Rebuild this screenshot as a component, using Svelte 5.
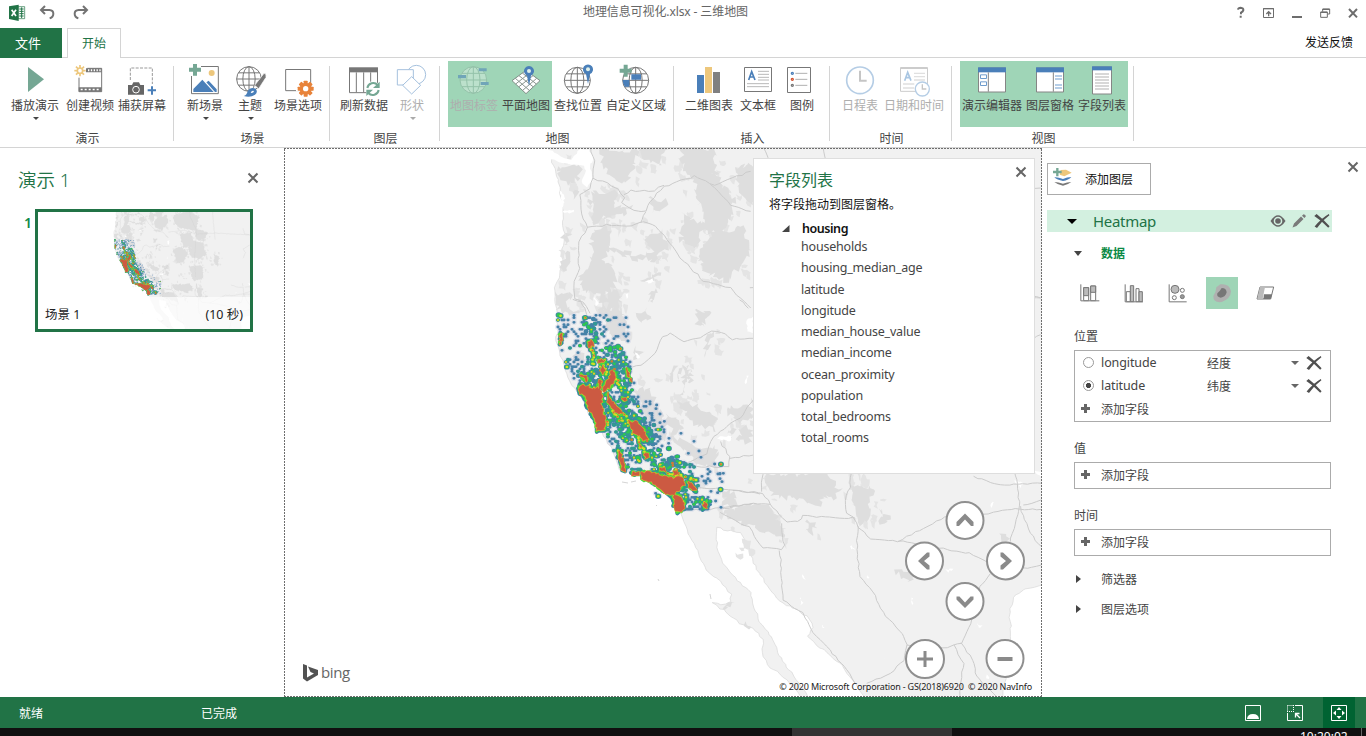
<script>
  // Ribbon glyphs are drawn on a 3x grid; ox/oy give the origin of that grid.
  const globe = (cx, cy, r, c) => `<g fill="none" stroke="${c}" stroke-width="3"><circle cx="${cx}" cy="${cy}" r="${r}" fill="#fff" fill-opacity=".55"/><ellipse cx="${cx}" cy="${cy}" rx="${r * 0.5}" ry="${r}"/><path d="M${cx} ${cy - r}V${cy + r}M${cx - r} ${cy}H${cx + r}M${cx - r * 0.85} ${cy - r * 0.5}H${cx + r * 0.85}M${cx - r * 0.85} ${cy + r * 0.5}H${cx + r * 0.85}"/></g>`;
  const pin = (x, y) => `<path d="M${x} ${y + 44}L${x - 6} ${y + 14}A15 15 0 1 1 ${x + 6} ${y + 14}Z" fill="#4a7fb9"/><circle cx="${x}" cy="${y}" r="6" fill="#dff0ea"/>`;
  const plus = (x, y, c = '#75a794') => `<path d="M${x - 6} ${y - 18}h12v12h12v12h-12v12h-12v-12h-12v-12h12z" fill="${c}"/>`;
  const gear = () => {
    let d = '';
    for (let i = 0; i < 4; i++) d += `<rect x="911" y="242" width="12" height="48" rx="2" transform="rotate(${i * 45} 917 266)" fill="#e8833a"/>`;
    return d + '<circle cx="917" cy="266" r="18" fill="#e8833a"/><circle cx="917" cy="266" r="8" fill="#fff"/>';
  };
  const sun = () => {
    let d = '';
    for (let i = 0; i < 8; i++) d += `<path d="M240 195v9" transform="rotate(${i * 45} 240 212)" stroke="#edc77c" stroke-width="5"/>`;
    return d + '<circle cx="240" cy="212" r="8" fill="none" stroke="#edc77c" stroke-width="5"/>';
  };
  const film = () => {
    let d = '<path d="M237 233V275H305V205H262" fill="none" stroke="#777" stroke-width="3"/><path d="M258 205h47v12h-47zM236 262h69v13h-69z" fill="#777"/><path d="M245 219h50v42h-50z" fill="#fff"/>';
    for (let i = 0; i < 5; i++) d += `<path d="M${264 + i * 8.5} 208h4v6h-4zM${242 + i * 12} 266h6v5h-6z" fill="#fff"/>`;
    return d;
  };
  const windowIcon = (x, w) => `<path d="M${x + 1.5} 204h${w - 3}v72h-${w - 3}z" fill="#fff" stroke="#858585" stroke-width="3"/><path d="M${x} 202h${w}v15h-${w}z" fill="#4a7fb9"/>`;
  const clock = (x, y, r, w) => `<circle cx="${x}" cy="${y}" r="${r}" fill="#fff" stroke="#b5cde5" stroke-width="${w}"/>`;

  const I = {
    play: '<path d="M84 201L132 238L84 276Z" fill="#75a794"/>',
    video: film() + sun(),
    capture: '<path d="M391 240V204H457V252" fill="none" stroke="#999" stroke-width="3" stroke-dasharray="9 4"/><path d="M384 255h12l4-8h17l4 8h11v29h-48z" fill="#666"/><circle cx="408" cy="269" r="10" fill="#666" stroke="#fff" stroke-width="3"/><path d="M443 271h25M456 259v25" stroke="#4a7fb9" stroke-width="6"/>',
    scene: '<path d="M603 199.5H655V281H574.500V228" fill="#fff" stroke="#777" stroke-width="3"/><circle cx="635" cy="219" r="9" fill="#edc77c"/><path d="M580 276v-9l27-28 34 37zM619 247l7-5 24 26v8h-5z" fill="#4a7fb9"/>' + plus(585, 209),
    theme: globe(747, 237, 37, '#777') + '<path d="M792 220q8 0 6 12l-22 34-12-10z" fill="#777" stroke="#fff" stroke-width="2"/><path d="M731 288q9-2 12-14 8-14 24-8 8 10-2 18-14 10-34 4z" fill="#4a7fb9"/><path d="M752 279q3-9 10-6-1 7-10 6z" fill="#fff"/>',
    options: '<path d="M857 208.500H932V272H857Z" fill="#fff" stroke="#777" stroke-width="3"/><path d="M888 272h50" stroke="#fff" stroke-width="5"/>' + gear(),
    refresh: '<path d="M58.500 55H142.500V128H58.500Z" fill="#fff" stroke="#777" stroke-width="3"/><path d="M57 52h87v15H57z" fill="#777"/><path d="M79 67v60M101 67v60M122 67v60" stroke="#777" stroke-width="3"/><circle cx="129" cy="117" r="23" fill="#fff"/><path d="M112 114a18 18 0 0 1 31-9M146 120a18 18 0 0 1-31 9" fill="none" stroke="#75a794" stroke-width="6"/><path d="M149 95v19h-20zM109 138v-19h20z" fill="#75a794"/>',
    shapes: '<g fill="#fff" stroke="#a5c1de" stroke-width="3"><circle cx="259" cy="74" r="28"/><path d="M202 59h48v46h-48z"/><path d="M245 80l27 26-27 26-27-26z"/></g>',
    tags: `<g opacity=".55">${globe(430, 90, 40, '#8bb39e')}<path d="M446 55h24v9h-24zM384 75h24v10h-24zM452 96h24v9h-24z" fill="#4a7fb9"/></g>`,
    flat: '<path d="M588 61L630 92L588 131L546 92Z" fill="#fff" stroke="#7f8f87" stroke-width="3"/><path d="M577 69l42 33M567 77l42 33M556 85l42 36M599 69l-42 33M609 77l-42 33M620 85l-42 36" stroke="#8a9690" stroke-width="3"/>' + pin(597, 63),
    find: globe(742, 91, 39, '#777') + pin(774, 58),
    custom: globe(917, 91, 39, '#777') + '<path d="M904 73h29v16h-29zM878 90h20v20h-14q-6-9-6-20z" fill="#4a7fb9"/>' + plus(887, 62),
    chart: '<path d="M81 75h21v54H81z" fill="#4a7fb9"/><path d="M105 51h21v78h-21z" fill="#edc77c"/><path d="M129 66h21v63h-21z" fill="#808080"/>',
    text: '<path d="M223.500 52.500h81v72h-81z" fill="#fff" stroke="#777" stroke-width="3"/><path d="M236 90l9-25 10 25M239 81h13" fill="none" stroke="#4a7fb9" stroke-width="5"/><path d="M264 64h33M264 73h33M264 82h33M264 90h33M231 101h66M231 110h66" stroke="#b8b8b8" stroke-width="3"/>',
    legend: '<path d="M352.500 52.500h69v75h-69z" fill="#fff" stroke="#777" stroke-width="3"/><path d="M376 70h36M376 88h36M376 106h36" stroke="#b0b0b0" stroke-width="3"/><g fill="none" stroke-width="4"><circle cx="367" cy="70" r="3" stroke="#4a7fb9"/><circle cx="367" cy="88" r="3" stroke="#d35230"/><circle cx="367" cy="106" r="3" stroke="#777"/></g>',
    timeline: clock(570, 91, 40, 5) + '<path d="M570 62v30h20" fill="none" stroke="#c5c5c5" stroke-width="6"/>',
    datetime: '<path d="M691.500 54h81v70h-81z" fill="#fff" stroke="#ccc" stroke-width="3"/><path d="M691 54h82" stroke="#ccc" stroke-width="6"/><path d="M704 92l9-25 10 25M707 83h13" fill="none" stroke="#a9c6e2" stroke-width="5"/><path d="M732 70h33M732 80h33M732 90h33M699 102h34M699 114h34" stroke="#e0e0e0" stroke-width="4"/>' + clock(757, 117, 21, 4) + '<path d="M757 103v14h12" fill="none" stroke="#c5c5c5" stroke-width="4"/>',
    editor: windowIcon(84, 84) + '<path d="M115 217v58" stroke="#858585" stroke-width="3"/><path d="M91.500 224.500h18v11h-18zM91.500 245.500h18v11h-18z" fill="#fff" stroke="#6f9ccc" stroke-width="3"/>',
    pane: windowIcon(258, 84) + '<path d="M310 217v58" stroke="#858585" stroke-width="3"/><path d="M315 228h21M315 237h21M315 255h21M315 264h21" stroke="#9fbfe0" stroke-width="5"/>',
    list: '<path d="M427.500 201h57v81h-57z" fill="#fff" stroke="#858585" stroke-width="3"/><path d="M426 199h60v12h-60z" fill="#4a7fb9"/><path d="M435 222h42M435 231h42M435 240h42M435 249h42M435 258h42M435 267h42" stroke="#ccc" stroke-width="5"/>'
  };

  const b = (label, icon, x, w, ox, oy, extra = {}) => ({ label, icon, w, vb: `${(x - ox) * 3} ${(64 - oy) * 3} ${w * 3} 108`, ...extra });
  const groups = [
    { name: '演示', w: 173, pl: 9, items: [b('播放演示', 'play', 9, 52, 0, 0, { arrow: 1 }), b('创建视频', 'video', 64, 52, 0, 0, { ml: 3 }), b('捕获屏幕', 'capture', 116, 52, 0, 0)] },
    { name: '场景', w: 155, pl: 7, items: [b('新场景', 'scene', 181, 48, 0, 0, { arrow: 1 }), b('主题', 'theme', 229, 42, 0, 0, { arrow: 1 }), b('场景选项', 'options', 272, 52, 0, 0, { ml: 1 })] },
    { name: '图层', w: 109, pl: 8, items: [b('刷新数据', 'refresh', 338, 52, 330, 50), b('形状', 'shapes', 391, 42, 330, 50, { ml: 1, arrow: 1, off: 1 })] },
    { name: '地图', w: 233, pl: 8, items: [b('地图标签', 'tags', 448, 52, 330, 50, { on: 1, off: 1 }), b('平面地图', 'flat', 500, 52, 330, 50, { on: 1 }), b('查找位置', 'find', 552, 52, 330, 50), b('自定义区域', 'custom', 604, 64, 330, 50)] },
    { name: '插入', w: 155, pl: 9, items: [b('二维图表', 'chart', 683, 52, 670, 50), b('文本框', 'text', 735, 46, 670, 50), b('图例', 'legend', 781, 42, 670, 50)] },
    { name: '时间', w: 121, pl: 7, items: [b('日程表', 'timeline', 837, 46, 670, 50, { off: 1 }), b('日期和时间', 'datetime', 883, 62, 670, 50, { off: 1 })] },
    { name: '视图', w: 181, pl: 8, items: [b('演示编辑器', 'editor', 960, 64, 950, 0, { on: 1 }), b('图层窗格', 'pane', 1024, 52, 950, 0, { on: 1 }), b('字段列表', 'list', 1076, 52, 950, 0, { on: 1 })] }
  ];

  const fields = ['households', 'housing_median_age', 'latitude', 'longitude', 'median_house_value', 'median_income', 'ocean_proximity', 'population', 'total_bedrooms', 'total_rooms'];

  let seed = 20;
  const rnd = () => ((seed = (seed * 1664525 + 1013904223) >>> 0) / 4294967296);
  const parse = (s) => s.trim().split(/\s+/).map((p) => p.split(',').map(Number));

  // Subdivides an outline and shifts the new points a little, for natural edges.
  function rough(str, amp, step, closed = true) {
    const pts = parse(str);
    const out = [];
    const n = closed ? pts.length : pts.length - 1;
    for (let i = 0; i < n; i++) {
      const a = pts[i], c = pts[(i + 1) % pts.length];
      const k = Math.max(1, Math.round(Math.hypot(c[0] - a[0], c[1] - a[1]) / step));
      for (let j = 0; j < k; j++) {
        const t = j / k;
        out.push([(a[0] + (c[0] - a[0]) * t + (rnd() - 0.5) * amp).toFixed(1), (a[1] + (c[1] - a[1]) * t + (rnd() - 0.5) * amp).toFixed(1)]);
      }
    }
    if (!closed) out.push(pts[pts.length - 1]);
    return 'M' + out.map((p) => p.join(' ')).join('L') + (closed ? 'Z' : '');
  }

  const land = rough('545,140 551,158 556,172 560,190 562,210 564,230 562,260 560,275 554,292 556,308 558,325 556,340 562,360 568,378 580,395 590,415 600,430 612,450 620,470 640,476 655,485 668,495 676,508 680,513 684,522 688,533 692,540 700,557 707,570 723,585 731,595 730,602 725,605 713,603 727,613 740,623 753,628 763,640 763,657 770,667 787,680 798,693 806,702 812,702 800,685 787,667 777,652 772,637 760,623 752,603 750,593 737,580 722,563 717,547 717,528 727,530 740,532 747,543 753,563 767,585 780,602 793,608 807,617 813,628 808,637 823,650 840,663 855,683 867,702 1002,702 1005,683 1008,657 1011,637 1010,613 1013,598 1023,590 1050,583 1050,140', 2.2, 4);
  const sound = rough('545,147 552,152 561,157 572,160 578,151 588,149 593,158 590,168 592,181 586,188 581,181 586,171 584,165 567,164 551,159', 2.5, 4);

  const hills = {
    '284,148': ['820,55 890,55 885,95 850,105 825,90', '950,5 1060,5 1050,60 1020,110 985,90 955,50', '925,130 995,130 990,170 950,220 925,225', '965,175 1040,175 1020,200 960,210', '930,240 975,240 985,290 960,330 1000,380 985,430 890,435 890,380 925,340 920,290', '840,310 860,320 845,370 832,360', '835,255 860,260 845,290', '815,435 865,430 850,480 900,490 860,500 825,490', '985,430 1015,440 1010,485 960,490 940,450', '1080,270 1140,250 1150,310 1110,320', '980,305 1060,320 1120,310 1130,335 1050,335', '1070,0 1150,0 1130,50 1080,40', '1190,0 1290,0 1300,70 1250,110 1200,70', '1230,90 1300,80 1350,160 1330,240 1270,260 1250,180', '1200,200 1260,230 1240,300 1190,280', '1290,250 1380,240 1400,320 1330,400 1260,370 1240,310', '1350,60 1400,50 1430,120 1400,170 1370,130', '1100,150 1150,160 1130,190 1100,190', '1070,390 1130,370 1110,400', '1095,430 1120,420 1100,470', '910,155 925,160 915,175', '870,130 885,135 875,150', '1050,600 1080,610 1055,640', '870,620 900,610 895,650 870,650', '1450,240 1620,190 1730,260 1690,400 1540,380 1460,330', '1520,440 1640,420 1680,560 1560,590', '1680,380 1820,420 1780,520 1700,500', '1600,560 1760,560 1740,700 1640,690'],
    '540,300': ['280,40 320,25 340,60 310,65', '465,30 510,40 490,80 470,70', '415,310 440,302 530,350 525,390 460,370', '375,345 405,350 430,380 400,400 375,375', '570,320 640,320 635,350 600,365 570,345', '390,400 470,440 530,440 530,500 480,495 440,465', '395,210 408,200 390,245', '430,200 450,195 440,260 425,290', '415,205 425,200 412,245', '500,100 520,100 495,165', '445,220 460,205 450,250', '180,20 250,30 265,130 220,110 190,70', '280,265 330,270 370,350 375,430 340,400 300,320', '610,380 635,385 630,430 590,420', '555,395 590,385 580,420', '680,160 760,120 850,180 790,280 720,300', '900,60 1000,80 1040,200 960,260 880,180', '850,330 990,320 1010,460 900,490', '1120,200 1180,230 1160,330 1120,300'],
    '540,470': ['670,15 860,10 900,60 885,90 850,80 840,110 790,90 700,80', '545,130 640,100 690,105 730,195 700,190 600,160', '940,50 1000,50 985,150 950,165 935,100', '1020,110 1050,150 1020,165 1030,140', '1070,300 1120,310 1110,330 1085,320', '550,65 590,65 585,110 555,110', '700,160 725,150 730,195 705,190', '800,150 825,155 820,195 808,190', '540,410 575,395 570,415', '610,455 630,465 620,475', '1385,195 1410,210 1395,220']
  };
  // Every hill is an outline plus a scatter of smaller fragments round it.
  const fragments = (s) => {
    const p = parse(s);
    const cx = p.reduce((a, q) => a + q[0], 0) / p.length, cy = p.reduce((a, q) => a + q[1], 0) / p.length;
    const size = Math.max(...p.map((q) => Math.hypot(q[0] - cx, q[1] - cy)));
    if (size < 40) return '';
    let d = '';
    for (let i = 0; i < size / 7; i++) {
      const a = rnd() * 6.28, r = size * (0.75 + rnd() * 0.45), w = 4 + rnd() * 9, h = 4 + rnd() * 14;
      const x = cx + Math.cos(a) * r * 0.9, y = cy + Math.sin(a) * r;
      d += rough(`${x - w},${y - h} ${x + w},${y - h * 0.6} ${x + w * 0.6},${y + h} ${x - w * 0.7},${y + h * 0.5}`, 7, 8);
    }
    return d;
  };
  const hillShapes = Object.entries(hills).map(([o, list]) => ({ o, d: list.map((s) => rough(s, 18, 8)).join(''), f: list.map(fragments).join('') }));
  const lakes = {
    '284,148': ['930,445 945,470 938,472', '1085,398 1105,393 1112,402 1095,404', '1052,612 1068,630 1060,632', '838,188 868,186 870,194 838,194', '830,130 842,140 836,185 830,180', '1025,440 1032,430 1030,455'],
    '540,300': ['530,412 575,405 572,422 545,420', '618,225 625,230 616,252', '620,60 640,50 636,100 622,95', '285,155 300,172 292,178'],
    '540,470': ['600,305 618,325 608,328', '652,318 662,330 655,345', '788,315 798,330 790,325', '780,380 788,400 782,405', '980,315 992,320 982,330', '1350,100 1364,95 1356,112', '1425,30 1450,40 1440,55', '1215,300 1238,295 1225,308', '930,225 945,240 932,236', '1115,380 1120,400 1116,402', '1312,460 1325,468 1318,475', '1480,0 1515,5 1510,30', '848,465 853,475 847,475', '1030,562 1042,575', '1340,610 1350,625 1342,628']
  };
  const lakeShapes = Object.entries(lakes).map(([o, list]) => ({ o, d: list.map((s) => rough(s, 6, 6)).join('') }));
  const roads = {
    '284,148': ['918,0 930,40 925,90 920,120 890,140 892,200 910,240 885,280 885,360 870,400 872,455 890,460 905,480 908,500', '925,92 970,105 1000,125 1020,150 1015,165 1050,188 1085,190 1090,170 1140,115 1230,85 1290,110 1400,70', '910,240 970,230 1040,235 1080,220 1115,235 1140,262 1190,330 1260,400 1340,420 1400,480', '1020,138 1040,128 1110,128 1140,112', '1085,190 1070,225', '1280,110 1340,170 1400,190', '1440,0 1470,80 1600,120 1800,100 2000,140 2270,120', '1400,420 1560,400 1700,440 1900,430 2270,450', '1620,0 1630,250 1700,400 1680,700 1690,900', '1860,60 1880,300 1900,500', '2200,380 2215,440 2270,450', '2200,700 2225,640 2200,600 2270,560'],
    '540,300': ['275,200 305,195 345,160 370,110 390,100 430,125 480,115 515,95 545,97 575,118 640,115', '440,490 500,460 520,410 570,370 600,355 640,300', '540,425 570,470 565,500 430,500', '570,475 640,465', '450,565 540,565 660,582', '430,630 540,625 640,610', '100,0 130,8 150,40', '600,0 625,25'],
    '540,470': ['580,60 670,70 690,100 740,155 775,155 790,138 870,143 940,143 955,170 990,205 1075,213 1140,180 1240,130 1330,135 1400,118 1505,118', '540,118 640,100 690,103', '540,128 600,160 630,170 650,210 670,232 725,240 732,225 725,160', '668,0 665,65', '932,0 930,50 915,90 920,130 945,145', '955,170 950,240 960,320 1000,365 1035,440 1080,480 1103,525 1090,570 1050,610 980,640', '720,243 728,390 790,430 820,490 870,540 920,600 945,640', '1075,213 1180,230 1290,250 1340,275 1420,300 1505,285', '1410,215 1440,110 1425,0', '1440,110 1470,190 1505,230', '1350,310 1320,350 1290,460 1265,520 1210,535 1100,525', '1240,525 1270,580 1260,680', '1265,520 1300,570 1310,620 1370,680', '1300,20 1380,45 1505,40', '1505,90 1450,105']
  };
  const roadShapes = Object.entries(roads).map(([o, list]) => ({ o, d: list.map((s) => rough(s, 5, 14, false)).join('') }));

  const zones = [
    ['50,38 268,38 268,170 70,165 50,100', 115, 0.1],
    ['64,165 268,165 285,260 110,255', 150, 0.25],
    ['120,250 280,255 300,330 350,440 330,490 300,480 230,400 180,390', 220, 0.45],
    ['270,250 345,310 370,380 390,450 340,450 300,340', 50, 0.1],
    ['190,390 300,470 310,510 250,510 215,440', 60, 0.3],
    ['310,470 430,480 470,500 480,560 430,590 330,530', 100, 0.4],
    ['470,500 550,515 550,545 500,560', 16, 0],
    ['430,575 510,580 505,630 435,632', 65, 0.15]
  ];
  const inside = (x, y, p) => {
    let r = false;
    for (let i = 0, j = p.length - 1; i < p.length; j = i++)
      if (p[i][1] > y !== p[j][1] > y && x < ((p[j][0] - p[i][0]) * (y - p[i][1])) / (p[j][1] - p[i][1]) + p[i][0]) r = !r;
    return r;
  };
  const dots = [];
  for (const [s, n, hot] of zones) {
    const p = parse(s);
    const xs = p.map((q) => q[0]), ys = p.map((q) => q[1]);
    const x0 = Math.min(...xs), x1 = Math.max(...xs), y0 = Math.min(...ys), y1 = Math.max(...ys);
    let k = 0;
    while (k < n) {
      const x = Math.round((x0 + rnd() * (x1 - x0)) / 6) * 6, y = Math.round((y0 + rnd() * (y1 - y0)) / 7) * 7 + 4;
      if (inside(x, y, p)) { dots.push({ x, y, h: rnd() < hot ? rnd() : 0 }); k++; }
    }
  }
  for (const [x, y] of parse('350,315 360,342 423,400 445,460 462,424 477,453 483,472 524,492 513,574 527,603 543,622 533,578 540,520 550,520 546,545 373,364 366,381 387,415 386,430 347,580 358,588')) dots.push({ x, y, h: 0 });
  const mark = (list, r) => list.map((d) => `M${d.x - r} ${d.y}a${r} ${r * 0.9} 0 1 0 ${2 * r} 0a${r} ${r * 0.9} 0 1 0 ${-2 * r} 0`).join('');

  const hotspots = ['118,262 130,256 150,262 165,268 176,262 183,280 187,300 180,310 188,330 192,350 200,372 190,388 172,390 170,378 165,360 150,330 140,310 138,290 122,278', '215,212 225,220 222,245 210,262 190,272 192,255 205,240', '202,280 212,300 235,325 252,342 240,342 222,330 205,312', '264,362 290,368 310,385 315,400 325,418 312,422 300,408 280,398 278,385', '305,516 345,518 370,530 400,535 425,530 432,555 410,575 388,585 372,575 350,560 330,542 305,540', '400,582 420,588 435,610 425,635 410,635 402,605', '145,125 155,122 160,135 150,140', '59,100 66,102 64,122 59,120', '60,128 65,128 64,134', '120,222 132,226 145,240 136,242', '174,180 195,180 192,187 174,187', '188,200 195,208 188,222 184,218', '260,208 267,214 268,230 263,226', '268,236 276,238 272,244', '248,294 260,294 258,301 249,301', '312,458 325,458 328,470 318,473', '234,450 240,456 244,472 253,490 254,512 246,510 244,490 234,470', '275,518 294,518 293,524 275,524', '402,512 413,512 414,521 404,524', '360,500 370,504 375,515 360,512', '443,548 452,552 467,568 460,570 446,560', '491,606 498,606 499,625 491,624', '180,240 186,255 178,268 175,255'];
  const warm = ['150,142 158,150 161,165 160,198', '228,232 240,268', '190,190 200,230', '255,345 270,370', '295,410 300,440 318,455', '215,335 245,365', '422,490 424,494', '450,538 470,538', '541,568 544,571', '542,495 544,497', '385,446 388,449', '80,203 84,206', '55,48 62,46', '135,52 140,55', '236,141 242,143', '355,586 358,588', '208,148 214,150', '295,470 300,482', '385,520 440,530', '188,350 206,372'];
  const cool = ['205,150 240,170 245,185', '155,65 155,110 152,125', '130,235 160,220 200,190 230,195', '215,200 240,240 255,290 245,330', '200,230 160,250', '190,290 210,340 240,370', '240,345 300,350 330,400 335,430', '250,380 270,420', '330,480 400,480 430,480', '380,500 400,500', '470,580 500,600', '345,445 355,448', '430,560 440,600', '225,330 265,410'];
  // Spreads dots of differing heat along a line.
  const scatter = (list, spread, gap) => list.flatMap((s) => {
    const p = parse(s), out = [];
    for (let i = 0; i < p.length - 1; i++) {
      const n = Math.max(1, Math.hypot(p[i + 1][0] - p[i][0], p[i + 1][1] - p[i][1]) / gap);
      for (let j = 0; j < n; j++) out.push({ x: p[i][0] + ((p[i + 1][0] - p[i][0]) * j) / n + (rnd() - 0.5) * spread, y: p[i][1] + ((p[i + 1][1] - p[i][1]) * j) / n + (rnd() - 0.5) * spread, h: rnd() });
    }
    return out;
  });
  const coolDots = scatter(cool, 34, 4);
  const warmDots = scatter(warm, 7, 6);
  const outer = hotspots.map((s) => rough(s, 12, 8)).join('');
  const middle = hotspots.map((s) => rough(s, 8, 7)).join('');
  const red = hotspots.map((s) => rough(s, 8, 6)).join('');
  const shift = (o) => `translate(${o.replace(',', ' ')}) scale(.33333)`;
</script>

{#snippet artwork()}
  <path d={land} fill="#f1f1f1" stroke="#d9d9d9" stroke-width=".7" />
  {#each hillShapes as h}<path transform={shift(h.o)} d={h.f} fill="#e4e4e4" /><path transform={shift(h.o)} d={h.d} fill="#dedede" />{/each}
  <path d={sound} fill="#fff" />
  {#each lakeShapes as h}<path transform={shift(h.o)} d={h.d} fill="#fff" />{/each}
  {#each roadShapes as h}<path transform={shift(h.o)} d={h.d} fill="none" stroke="#cbcbcb" stroke-width="3" />{/each}
  <path d="M622 482l6 1M631 482l5-1M656 505l1 1M658 579l1 2M710 594l1 5" stroke="#d5d5d5" />
  <g transform="translate(540 300) scale(.33333)" stroke-linejoin="round" stroke-linecap="round">
    <path d={mark(dots, 9)} fill="#c6cbe0" opacity=".4" />
    <path d={mark(coolDots, 7.5) + mark(warmDots, 9)} fill="#4384a8" />
    <path d={outer} fill="#4384a8" stroke="#4384a8" stroke-width="12" />
    <path d={mark(dots, 4.8)} fill="#4681a8" />
    <path d={mark(coolDots.filter((d) => d.h > 0.25), 5.5)} fill="#319a93" />
    <path d={mark(dots.filter((d) => d.h > 0), 6)} fill="#319a93" />
    <path d={outer} fill="#2bb26b" stroke="#2ba37c" stroke-width="7" />
    <path d={mark(warmDots, 6.5) + mark(coolDots.filter((d) => d.h > 0.66), 4.5)} fill="#2ec653" />
    <path d={mark(dots.filter((d) => d.h > 0.6), 4.5)} fill="#32c94a" />
    <path d={middle} fill="#4fd83a" stroke="#4fd83a" stroke-width="7" />
    <path d={mark(warmDots.filter((d) => d.h > 0.2), 4)} fill="#d9dc24" />
    <path d={mark(dots.filter((d) => d.h > 0.85), 3.5) + mark(coolDots.filter((d) => d.h > 0.88), 3)} fill="#e6c52c" />
    <path d={mark(warmDots.filter((d) => d.h > 0.75), 3.2) + mark(coolDots.filter((d) => d.h > 0.95), 4)} fill="#d8703c" />
    <path d={red} fill="#cc5a42" stroke="#dfc032" stroke-width="4.500" />
    <path d={red} fill="#cc5a42" stroke="#cc5a42" stroke-width="2" />
  </g>
{/snippet}

{#snippet cross()}
  <svg width="12" height="12" viewBox="0 0 12 12"><path d="M1.500 1.500l9 9M10.500 1.500l-9 9" stroke="#666" stroke-width="2" /></svg>
{/snippet}

{#snippet bin()}
  <svg class="bin" width="16" height="14" viewBox="0 0 16 14"><path d="M.3 2L2.600 0Q9 5 15.600 12.200L14.200 13.800Q7.500 6.500 .3 2zM14.800 0L15.400 1.200Q8 6.500 3 14L.6 12.600Q7 4.500 14.800 0z" fill="#505050" /></svg>
{/snippet}

<div class="app">
  <header class="titlebar">
    <svg class="quick" width="100" height="28" viewBox="0 0 300 84">
      <path d="M54 20h20v36H54z" fill="#fff" stroke="#217346" stroke-width="2" /><path d="M58 27h13M58 34h13M58 41h13M58 48h13M65 22v32" stroke="#217346" stroke-width="3" />
      <path d="M27 19l29-5v49l-29-6z" fill="#217346" /><path d="M35 29l13 19M48 29L35 48" stroke="#fff" stroke-width="5" />
      <path d="M123 30h25q12 1 12 11t-11 14M135 18l-12 12 12 12" fill="none" stroke="#737373" stroke-width="6" />
      <path d="M261 30h-25q-12 1-12 11t11 14M249 18l12 12-12 12" fill="none" stroke="#737373" stroke-width="6" />
    </svg>
    <span class="doc">地理信息可视化.xlsx - 三维地图</span>
    <svg class="window-controls" width="136" height="28" viewBox="840 0 408 84" fill="none" stroke="#6d6d6d" stroke-width="4">
      <path d="M864 29q1-6 8-6 9 1 8 8-1 4-7 7v5M872 47v6" stroke-width="6" />
      <path d="M940.500 25.500h30v27h-30z" stroke-width="3" /><path d="M940 26h31" stroke-width="4" /><path d="M956 49V36M949 42l7-7 7 7" stroke-width="4" />
      <path d="M1026 51h30" stroke-width="6" /><path d="M1112 36h20v16h-20zM1118 35v-8h21v15h-6" stroke-width="3" /><path d="M1112 37h20M1118 28h21" />
      <path d="M1197 27l24 25M1221 27l-24 25" stroke-width="6" />
    </svg>
  </header>

  <nav class="tabs">
    <div class="file">文件</div>
    <div class="tab">开始</div>
    <div class="feedback">发送反馈</div>
  </nav>

  <section class="ribbon">
    {#each groups as g}
      <div class="group" style="width:{g.w}px">
        <div class="buttons" style="padding-left:{g.pl}px">
          {#each g.items as it}
            <div class="btn" class:on={it.on} class:off={it.off} style="width:{it.w}px;margin-left:{it.ml ?? 0}px">
              <svg width={it.w} height="36" viewBox={it.vb}>{@html I[it.icon]}</svg>
              <span>{it.label}</span>
              {#if it.arrow}<i></i>{/if}
            </div>
          {/each}
        </div>
        <div class="group-name">{g.name}</div>
      </div>
      <div class="sep"></div>
    {/each}
  </section>

  <main>
    <aside class="tour">
      <div class="tour-head"><h2>演示 1</h2>{@render cross()}</div>
      <div class="scene">
        <b>1</b>
        <div class="thumb">
          <svg width="212" height="117" viewBox="284 216 758 418" preserveAspectRatio="none">{@render artwork()}</svg>
          <div class="caption"><span>场景 1</span><span>(10 秒)</span></div>
        </div>
      </div>
    </aside>

    <section class="map">
      <svg class="canvas" width="758" height="549" viewBox="284 148 758 549">
        {@render artwork()}
        <path d="M284 148.500H1042M284.500 149V697M1041.500 149V697M284 696.500H1042" stroke="#6e6e6e" stroke-dasharray="2 1" />
        <g fill="#fff" stroke="#8f8f8f" stroke-width="2">
          <circle cx="965" cy="520.500" r="18.500" /><circle cx="924.500" cy="561" r="18.500" /><circle cx="1005.500" cy="561" r="18.500" /><circle cx="965" cy="601.500" r="18.500" /><circle cx="925" cy="659" r="19" /><circle cx="1005" cy="658.500" r="18.500" />
        </g>
        <g fill="#8a8a8a">
          <path d="M965 513.500l8.500 8.500v4h-2.500l-6-6.500-6 6.500h-2.500V522zM965 608l8.500-8.500v-3h-3l-5.500 6-5.500-6h-3v3zM918 561l9-8.500h2.500v4l-5.500 4.500 5.500 4.500v4H927zM1012 561l-9-8.500h-2.500v4l5.500 4.500-5.500 4.500v4h2.500z" />
          <path d="M917 657.500h6.500v-6.500h3v6.500h6.500v3h-6.500v6.500h-3v-6.500h-6.500zM997.500 657h15v4h-15z" />
        </g>
        <path d="M303 664l4 1.500v12l7-4-3.500-1.500-2.500-5.500 10 3.500v5l-11 6.500-4-3z" fill="#525252" />
      </svg>
      <span class="bing">bing</span>
      <span class="copyright">© 2020 Microsoft Corporation - GS(2018)6920&nbsp; © 2020 NavInfo</span>
      <div class="fields">
        <div class="fields-head"><h3>字段列表</h3>{@render cross()}</div>
        <p>将字段拖动到图层窗格。</p>
        <div class="table"><svg width="8" height="7" viewBox="0 0 8 7"><path d="M7.500 0v7H0z" fill="#444" /></svg>housing</div>
        {#each fields as f}<div class="field">{f}</div>{/each}
      </div>
    </section>

    <aside class="layers">
      <div class="layers-top">
        <div class="add-layer">
          <svg width="19" height="18" viewBox="51 57 57 54"><path d="M74 63l16-1 17 9-22 11-14-5z" fill="#edc77c" /><path d="M55 85q11-1 26 5 12-6 25-6-8 9-25 12-18-3-26-11z" fill="#4a7fb9" /><path d="M55 99q12 0 26 5 12-5 25-5-10 8-25 11-17-3-26-11z" fill="#777" /><path d="M51 69h26M64 57v25" stroke="#75a794" stroke-width="7" /></svg>
          添加图层
        </div>
        {@render cross()}
      </div>
      <div class="layer-bar">
        <i class="down black"></i><span>Heatmap</span>
        <svg class="eye" width="16" height="14" viewBox="0 0 16 14"><path d="M.5 7Q8-4.500 15.500 7 8 18.500.5 7z" fill="#666" /><circle cx="8" cy="7" r="4.300" fill="#d3f0e0" /><circle cx="8" cy="7" r="2.800" fill="#666" /></svg>
        <svg class="pencil" width="14" height="14" viewBox="0 0 14 14"><path d="M.5 13.500l1.500-4 7-7 2.500 2.500-7 7zM10 1.700L11.500.2Q14 .5 13.800 2.500L12.400 4z" fill="#7a7a7a" /></svg>
        {@render bin()}
      </div>
      <div class="data-head"><i class="down"></i><b>数据</b></div>
      <div class="kinds">
        <div><svg width="20" height="19" viewBox="131 401 60 57" fill="#fff" stroke="#777" stroke-width="3"><path d="M133.500 402v49.500H189" fill="none" /><path d="M142 412h15v39h-15zM163 407h15v44h-15z" /><path d="M142 412h15v24h-15zM163 407h15v19h-15z" fill="#bbb" /></svg></div>
        <div><svg width="20" height="19" viewBox="265 401 60 57" fill="#fff" stroke="#777" stroke-width="3"><path d="M268.500 402v52.500H322" fill="none" /><path d="M272 424h12v30h-12zM301 415h9v39h-9z" /><path d="M284 406h10v48h-10zM310 424h10v30h-10z" fill="#bbb" /></svg></div>
        <div><svg width="20" height="19" viewBox="397 401 60 57" fill="#fff" stroke="#777" stroke-width="3"><path d="M400.500 402v52.500H453" fill="none" /><circle cx="418" cy="417" r="12" fill="#bbb" /><circle cx="440" cy="420" r="6" /><circle cx="416" cy="442" r="6" /><circle cx="440" cy="439" r="6" fill="#999" /></svg></div>
        <div class="active"><svg width="20" height="20" viewBox="528 399 60 60"><path d="M553 403Q581 400 585 424 584 447 557 456 531 459 532 438 540 428 541 412z" fill="#b0b0b0" /><path d="M557 414q14 0 15 13-3 14-18 16-13-2-10-13 7-5 13-16z" fill="#777" /></svg></div>
        <div><svg width="20" height="16" viewBox="662 403 60 48"><path d="M674 409h41l-9 36h-41z" fill="#fff" stroke="#777" stroke-width="3" /><path d="M674 409h15l-7 35h-16z" fill="#bbb" /><path d="M686 431h24l-4 14h-22z" fill="#777" /></svg></div>
      </div>
      <div class="label loc">位置</div>
      <div class="box tall">
        <div class="row"><span class="radio"></span><span class="name">longitude</span><span class="role">经度</span><i class="down small"></i>{@render bin()}</div>
        <div class="row"><span class="radio checked"></span><span class="name">latitude</span><span class="role">纬度</span><i class="down small"></i>{@render bin()}</div>
        <div class="row"><span class="plus"></span><span>添加字段</span></div>
      </div>
      <div class="label val">值</div>
      <div class="box"><div class="row"><span class="plus"></span><span>添加字段</span></div></div>
      <div class="label time">时间</div>
      <div class="box second"><div class="row"><span class="plus"></span><span>添加字段</span></div></div>
      <div class="fold first"><i class="right"></i>筛选器</div>
      <div class="fold"><i class="right"></i>图层选项</div>
    </aside>
  </main>

  <footer class="status">
    <span class="ready">就绪</span><span class="done">已完成</span>
    <div class="modes">
      <div><svg width="16" height="16" viewBox="0 0 16 16"><path d="M.5.5h15v15H.5z" fill="none" stroke="#fff" /><path d="M2 14Q2.500 9 8 9t6 5z" fill="#fff" /></svg></div>
      <div><svg width="16" height="16" viewBox="0 0 16 16" fill="none" stroke="#fff"><path d="M8 .5h7.500v15H.5V8" /><path d="M.5.5H7M.5.5V7M0 6.500h7M6.500 0v7" stroke-dasharray="1 1" /><path d="M13 13L9 9M8.500 12.500v-4h4" stroke-width="1.300" /></svg></div>
      <div class="active"><svg width="16" height="16" viewBox="0 0 16 16"><path d="M.5.5h15v15H.5z" fill="none" stroke="#fff" /><path d="M8 2l2.500 3h-5zM8 14l2.500-3h-5zM2 8l3-2.500v5zM14 8l-3-2.500v5z" fill="#fff" /></svg></div>
    </div>
  </footer>
  <div class="taskbar"><div class="task"></div><span>10:20:02</span><div class="edge"></div></div>
</div>

<style>
  :global(body) { margin: 0; background: #fff; overflow: hidden; }
  .app { width: 1366px; height: 736px; overflow: hidden; display: flex; flex-direction: column; font-family: "Noto Sans", "Noto Sans CJK SC", sans-serif; font-size: 12px; color: #444; background: #fff; }
  .app :global(svg) { display: block; flex: none; }
  h2, h3, p { margin: 0; font-weight: 400; }
  .titlebar { height: 28px; flex: none; display: flex; }
  .quick { margin-right: 383px; }
  .doc { margin-left: 100px; width: 166px; line-height: 24px; color: #666; letter-spacing: -0.1px; white-space: nowrap; }
  .window-controls { margin-left: auto; }
  .tabs { height: 30px; flex: none; display: flex; box-sizing: border-box; border-bottom: 1px solid #d4d4d4; }
  .file { width: 62px; height: 30px; box-sizing: border-box; padding-left: 15px; background: #217346; color: #fff; font-size: 13px; line-height: 30px; }
  .tab { width: 54px; height: 30px; margin-left: 5px; box-sizing: border-box; border: 1px solid #d4d4d4; border-bottom: 0; background: #fff; color: #217346; text-align: center; line-height: 29px; }
  .feedback { margin-left: auto; margin-right: 13px; line-height: 29px; color: #111; }
  .ribbon { height: 90px; flex: none; display: flex; box-sizing: border-box; border-bottom: 1px solid #d4d4d4; }
  .group { flex: none; display: flex; flex-direction: column; padding-top: 3px; box-sizing: border-box; }
  .buttons { height: 66px; display: flex; }
  .btn { height: 66px; flex: none; display: flex; flex-direction: column; align-items: center; white-space: nowrap; padding-top: 3px; box-sizing: border-box; }
  .btn.on { background: #9fd5b7; }
  .btn span { line-height: 14px; margin-top: -1px; }
  .btn.off span { color: #aeaeae; }
  .btn i { border: 3px solid transparent; border-top-color: #444; border-bottom: 0; margin-top: 4px; margin-left: 2px; }
  .btn.off i { border-top-color: #aaa; }
  .group-name { text-align: center; line-height: 24px; padding-left: 2px; }
  .sep { width: 1px; height: 75px; margin-top: 8px; background: #d4d4d4; flex: none; }
  main { height: 549px; flex: none; display: flex; }
  .tour { width: 284px; flex: none; box-sizing: border-box; padding: 18px 25px 0 18px; }
  .tour-head { display: flex; justify-content: space-between; align-items: center; height: 27px; }
  .tour-head h2 { font-size: 18.500px; line-height: 27px; font-weight: 350; color: #217346; }
  .tour-head :global(svg) { margin-top: -3px; }
  .scene { display: flex; margin-top: 16px; }
  .scene b { width: 17px; text-align: center; padding-left: 3px; box-sizing: border-box; font-size: 14px; font-weight: 600; line-height: 27px; color: #128a48; }
  .thumb { width: 212px; height: 117px; border: 3px solid #217346; flex: none; display: grid; margin-right: -10px; }
  .thumb > :global(*) { grid-area: 1 / 1; }
  .caption { align-self: end; height: 32px; background: rgba(255, 255, 255, .65); display: flex; justify-content: space-between; padding: 0 7px; line-height: 35px; font-size: 12.500px; color: #222; z-index: 1; }
  .map { width: 758px; flex: none; position: relative; }
  .bing { position: absolute; left: 37px; top: 514px; font: 15px/20px "Open Sans", sans-serif; letter-spacing: -.4px; color: #666; }
  .copyright { position: absolute; right: 10px; top: 532px; font: 9px/13px "Noto Sans", sans-serif; letter-spacing: -.17px; color: #222; white-space: nowrap; }
  .fields { position: absolute; left: 469px; top: 10px; width: 282px; height: 316px; box-sizing: border-box; border: 1px solid #dedede; background: #fff; padding: 9px 7px 0 15px; }
  .fields-head { display: flex; justify-content: space-between; height: 27px; }
  .fields-head h3 { font-size: 16px; line-height: 24px; color: #217346; }
  .fields-head :global(svg) { margin-top: -2px; }
  .fields p { line-height: 20px; color: #111; }
  .table { display: flex; align-items: center; gap: 12px; height: 20px; margin-top: 3px; padding-left: 13px; font-size: 12.500px; font-weight: 600; color: #111; letter-spacing: -.45px; }
  .field { padding-left: 32px; font-size: 12.500px; letter-spacing: -.2px; line-height: 21.270px; height: 21.270px; position: relative; top: -2px; }
  .layers { width: 324px; flex: none; box-sizing: border-box; padding: 15px 7px 0 5px; }
  .layers-top { display: flex; justify-content: space-between; }
  .layers-top > :global(svg) { margin-top: -2px; }
  .add-layer { width: 104px; height: 32px; box-sizing: border-box; border: 1px solid #ababab; display: flex; align-items: center; gap: 13px; padding-left: 5px; color: #111; }
  .add-layer :global(svg) { margin-top: -4px; }
  .layer-bar { width: 285px; height: 22px; margin-top: 15px; box-sizing: border-box; background: #d3f0e0; display: flex; align-items: center; padding: 0 2px 0 20px; }
  .layer-bar span { margin-left: 16px; font-size: 15px; letter-spacing: -.3px; color: #217346; }
  .eye { margin-left: auto; }
  .pencil { margin: 0 8px 0 6px; }
  .down { border: 4.500px solid transparent; border-top: 5px solid #444; border-bottom: 0; }
  .down.black { border-left-width: 5px; border-right-width: 5px; border-top-color: #000; }
  .down.small { border-width: 4px 4px 0; border-top-color: #666; }
  .data-head { display: flex; align-items: center; height: 20px; margin-top: 11px; padding-left: 27px; color: #0c8a45; }
  .data-head b { margin-left: 19px; font-weight: 700; }
  .kinds { display: flex; gap: 12px; margin: 14px 0 0 27px; }
  .kinds div { width: 32px; height: 32px; display: flex; align-items: center; justify-content: center; }
  .kinds .active { background: #9fd5b7; }
  .label { padding-left: 27px; line-height: 20px; height: 20px; }
  .loc { margin-top: 18px; }
  .val { margin-top: 17px; }
  .time { margin-top: 17px; }
  .box { width: 257px; height: 27px; margin: 3px 0 0 27px; box-sizing: border-box; border: 1px solid #ababab; padding: 0 8px; }
  .box.tall { height: 72px; }
  .row { height: 23px; display: flex; align-items: center; }
  .radio { width: 11px; height: 11px; box-sizing: border-box; border: 1px solid #999; border-radius: 50%; margin-right: 7px; flex: none; }
  .radio.checked { background: radial-gradient(circle, #444 2.300px, #fff 2.900px); }
  .name { width: 106px; font-size: 12.500px; letter-spacing: -.1px; }
  .role { width: 84px; }
  .row :global(.bin) { margin-left: auto; }
  .plus { width: 9px; height: 9px; margin: 0 11px 0 -2px; background: linear-gradient(#666, #666) center / 9px 3px no-repeat, linear-gradient(#666, #666) center / 3px 9px no-repeat; }
  .fold { height: 20px; margin-top: 10px; padding-left: 29px; display: flex; align-items: center; gap: 20px; }
  .fold.first { margin-top: 13px; }
  .right { border: 4.500px solid transparent; border-left: 5px solid #444; border-right: 0; }
  .status { height: 31px; flex: none; background: #217346; color: #fff; display: flex; line-height: 33px; padding-left: 19px; }
  .ready { width: 182px; }
  .modes { margin-left: auto; margin-right: 11px; display: flex; }
  .modes div { width: 32px; height: 31px; display: flex; align-items: center; justify-content: center; margin-left: 10px; }
  .modes .active { background: #006332; margin-left: 12px; }
  .taskbar { height: 8px; flex: none; background: #101010; display: flex; overflow: hidden; }
  .task { width: 160px; height: 8px; margin-left: 792px; background: #333; }
  .taskbar span { margin-left: 348px; font-size: 12px; line-height: 18px; color: #fff; width: 60px; flex: none; }
  .edge { width: 1px; background: #666; flex: none; margin-left: 1px; }
</style>
